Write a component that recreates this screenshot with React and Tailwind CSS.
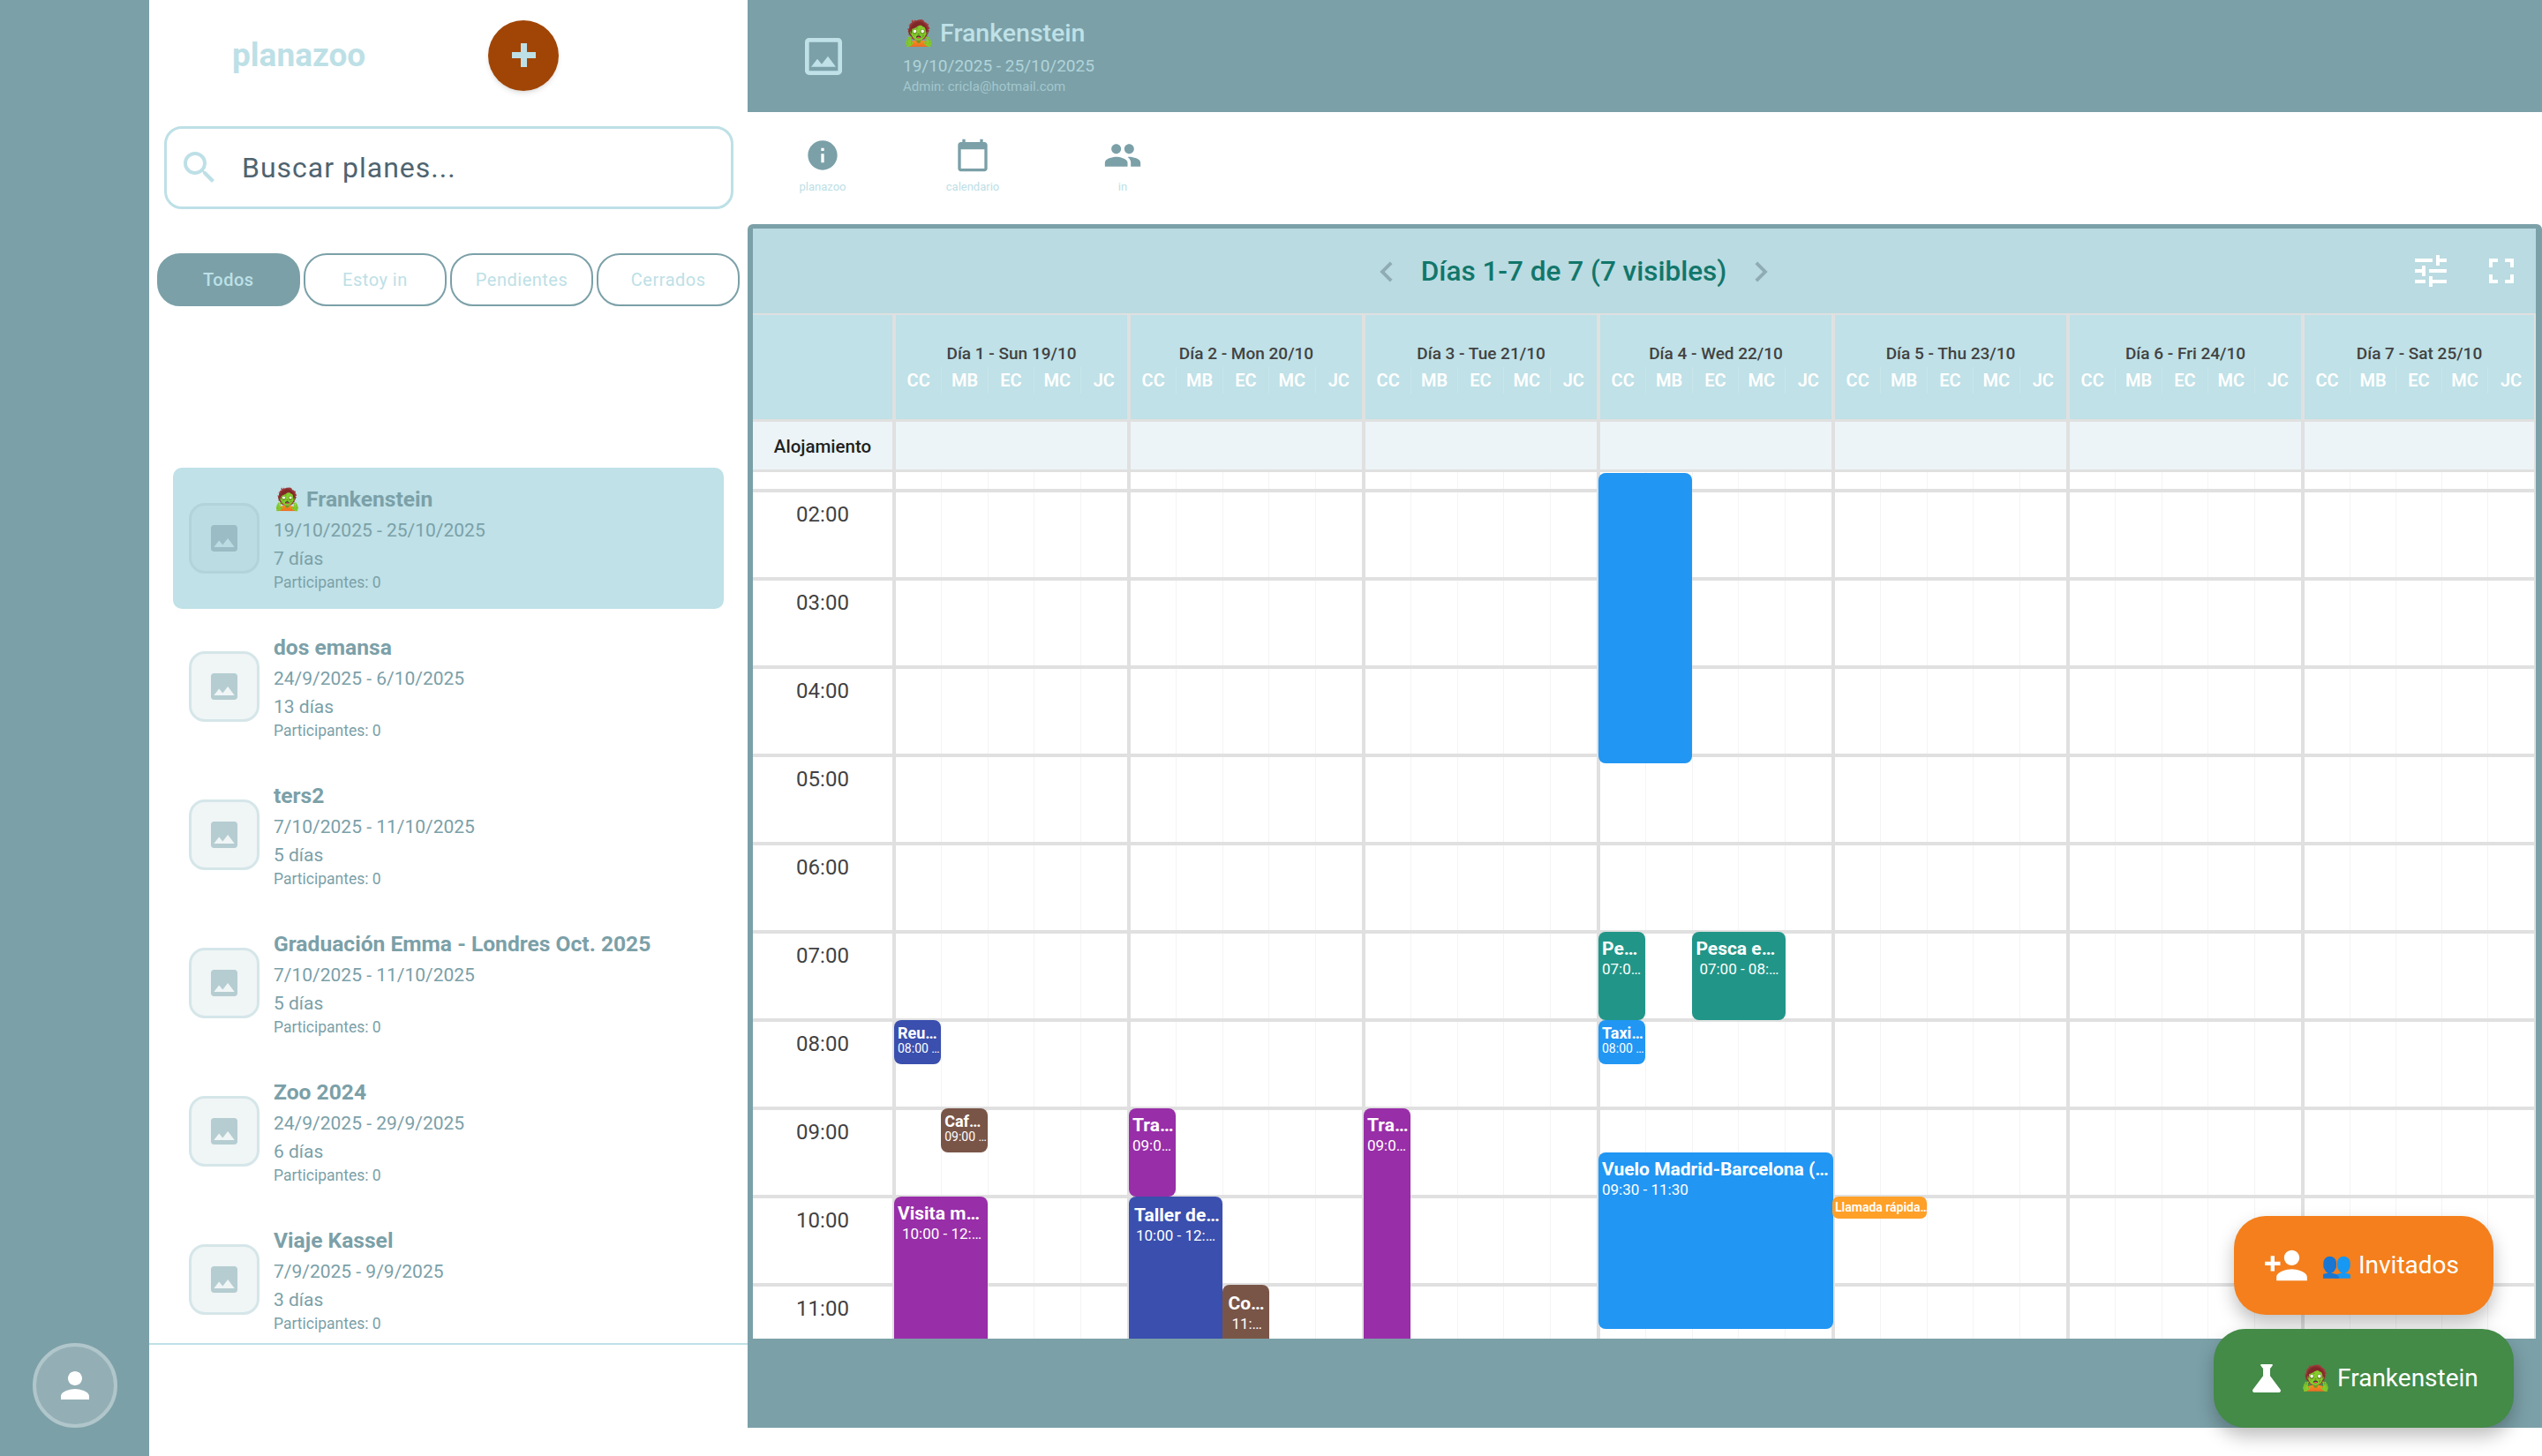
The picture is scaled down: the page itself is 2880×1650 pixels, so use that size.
import {
  MdSearch, MdImage, MdOutlineImage, MdInfo, MdCalendarToday, MdPeople,
  MdChevronLeft, MdChevronRight, MdTune, MdFullscreen, MdPerson, MdPersonAdd, MdScience,
} from 'react-icons/md';

const rail = 'bg-[#7ba0a8]';

const plans = [
  { name: '🧟 Frankenstein', dates: '19/10/2025 - 25/10/2025', days: '7 días', active: true },
  { name: 'dos emansa', dates: '24/9/2025 - 6/10/2025', days: '13 días' },
  { name: 'ters2', dates: '7/10/2025 - 11/10/2025', days: '5 días' },
  { name: 'Graduación Emma - Londres Oct. 2025', dates: '7/10/2025 - 11/10/2025', days: '5 días' },
  { name: 'Zoo 2024', dates: '24/9/2025 - 29/9/2025', days: '6 días' },
  { name: 'Viaje Kassel', dates: '7/9/2025 - 9/9/2025', days: '3 días' },
];

const filters = ['Todos', 'Estoy in', 'Pendientes', 'Cerrados'];
const days = ['Día 1 - Sun 19/10', 'Día 2 - Mon 20/10', 'Día 3 - Tue 21/10', 'Día 4 - Wed 22/10', 'Día 5 - Thu 23/10', 'Día 6 - Fri 24/10', 'Día 7 - Sat 25/10'];
const people = ['CC', 'MB', 'EC', 'MC', 'JC'];
const hours = ['02:00', '03:00', '04:00', '05:00', '06:00', '07:00', '08:00', '09:00', '10:00', '11:00'];

const events = [
  { day: 3, col: 0, span: 2, start: 1.8, end: 5.09, color: 'bg-[#2196f3]' },
  { day: 3, col: 0, span: 1, start: 7, end: 8, color: 'bg-[#219688]', title: 'Pe…', time: '07:0…' },
  { day: 3, col: 2, span: 2, start: 7, end: 8, color: 'bg-[#219688]', title: 'Pesca e…', time: '07:00 - 08:…', timePad: 'pl-[4px]' },
  { day: 3, col: 0, span: 1, start: 8, end: 8.5, color: 'bg-[#2196f3]', title: 'Taxi…', time: '08:00 …', small: true },
  { day: 3, col: 0, span: 5, start: 9.5, end: 11.5, color: 'bg-[#2196f3]', title: 'Vuelo Madrid-Barcelona (…', time: '09:30 - 11:30' },
  { day: 0, col: 0, span: 1, start: 8, end: 8.5, color: 'bg-[#3a4fae]', title: 'Reu…', time: '08:00 …', small: true },
  { day: 0, col: 1, span: 1, start: 9, end: 9.5, color: 'bg-[#795548]', title: 'Caf…', time: '09:00 …', small: true },
  { day: 0, col: 0, span: 2, start: 10, end: 13, color: 'bg-[#982ea8]', title: 'Visita m…', time: '10:00 - 12:…', timePad: 'pl-[5px]' },
  { day: 1, col: 0, span: 1, start: 9, end: 10, color: 'bg-[#982ea8]', title: 'Tra…', time: '09:0…' },
  { day: 1, col: 0, span: 2, start: 10, end: 13, color: 'bg-[#3a4fae]', title: 'Taller de…', time: '10:00 - 12:…', low: true, timePad: 'pl-[2px]' },
  { day: 1, col: 2, span: 1, start: 11, end: 13, color: 'bg-[#795548]', title: 'Co…', time: '11:…', low: true, timePad: 'pl-[4px]' },
  { day: 2, col: 0, span: 1, start: 9, end: 13, color: 'bg-[#982ea8]', title: 'Tra…', time: '09:0…' },
];

const gridCols = 'grid grid-cols-[160px_repeat(6,266px)_1fr]';

function PlanItem({ plan }) {
  return (
    <div className={`mx-[27px] mb-[8px] h-[160px] shrink-0 flex items-center pl-[18px] rounded-[10px] ${plan.active ? 'bg-[#bfe1e7]' : ''}`}>
      <div className={`w-[80px] h-[80px] shrink-0 rounded-[18px] border-[3px] flex items-center justify-center ${plan.active ? 'bg-[#bbdce2] border-[#b2d3d9] text-[#9bbcc4]' : 'bg-[#f0f5f6] border-[#d5e6e9] text-[#b5cdd1]'}`}>
        <MdImage size={40} />
      </div>
      <div className="ml-[16px] text-[#7ba0a8] whitespace-nowrap">
        <div className="h-[34px] leading-[34px] text-[24.6px] font-bold mb-[1px]">{plan.name}</div>
        <div className="h-[34px] leading-[34px] text-[21px]">{plan.dates}</div>
        <div className="h-[30px] leading-[30px] text-[21px]">{plan.days}</div>
        <div className="h-[24px] leading-[24px] text-[17.5px]">Participantes: 0</div>
      </div>
    </div>
  );
}

function Sidebar() {
  return (
    <div className="w-[678px] shrink-0 h-[1650px] flex flex-col bg-white">
      <div className="h-[125px] flex items-center">
        <div className="ml-[94px] w-[290px] text-[37px] font-bold text-[#bde0e6] leading-none">planazoo</div>
        <div className="w-[80px] h-[80px] rounded-full bg-[#a04506] text-[#bde0e6] flex items-center justify-center shadow-md">
          <svg width="27" height="27" viewBox="0 0 27 27" fill="currentColor">
            <path d="M10 0h7v10h10v7H17v10h-7V17H0v-7h10z" />
          </svg>
        </div>
      </div>
      <div className="ml-[17px] mr-[16px] mt-[18px] h-[94px] rounded-[20px] border-[3px] border-[#bde0e6] flex items-center pl-[13px]">
        <MdSearch size={48} className="text-[#bde0e6]" />
        <span className="ml-[24px] text-[32px] tracking-[1px] text-[#4f6470]">Buscar planes...</span>
      </div>
      <div className="mx-[9px] mt-[50px] grid grid-cols-4 gap-[4.5px]">
        {filters.map((f, i) => (
          <div
            key={f}
            className={`h-[60px] rounded-[26px] border-2 border-[#7ba0a8] flex items-center justify-center text-[20px] tracking-[0.5px] text-[#bde0e6] ${i === 0 ? 'bg-[#7ba0a8] font-medium' : ''}`}
          >
            {f}
          </div>
        ))}
      </div>
      <div className="mt-[183px] h-[994px] flex flex-col overflow-hidden border-b-2 border-[#bde0e6]">
        {plans.map((p) => (
          <PlanItem key={p.name} plan={p} />
        ))}
      </div>
    </div>
  );
}

function TopTab({ icon, label }) {
  return (
    <div className="w-[170px] flex flex-col items-center text-[#7ba0a8]">
      <div className="h-[40px] flex items-center justify-center">{icon}</div>
      <div className="mt-[6px] text-[13px] leading-[20px] text-[#bde0e6]">{label}</div>
    </div>
  );
}

function SubCols() {
  return (
    <div className="absolute inset-0 grid grid-cols-5">
      {people.map((p) => (
        <div key={p} className="border-r border-[#f4f4f4] last:border-r-0" />
      ))}
    </div>
  );
}

function EventBlock({ ev }) {
  const left = 160 + ev.day * 266 + ev.col * 53.2;
  const top = 201 + (ev.start - 2) * 100;
  const style = { left, top, width: ev.span * 53.2 - 0.5, height: (ev.end - ev.start) * 100 };
  return (
    <div className={`absolute rounded-[8px] text-white whitespace-nowrap ${ev.color} ${ev.low ? 'pt-[9px] px-[6px]' : ev.small ? 'pt-[6px] px-[4px]' : 'pt-[7px] px-[4px]'}`} style={style}>
      {ev.title && (
        <div className={`font-bold ${ev.small ? 'text-[18px] leading-[18px]' : 'text-[21px] leading-[24px]'}`}>{ev.title}</div>
      )}
      {ev.time && (
        <div className={`${ev.timePad || ''} ${ev.small ? 'text-[14px] leading-[16px]' : 'text-[17px] leading-[22px]'}`}>{ev.time}</div>
      )}
    </div>
  );
}

function Calendar() {
  return (
    <div className="h-[1263px] rounded-t-[6px] border-t-[5px] border-l-[6px] border-r-[7px] border-[#7ba0a8] flex flex-col overflow-hidden">
      <div className="h-[96px] shrink-0 bg-[#b9dbe1] flex items-center relative">
        <div className="w-full flex items-center justify-center pr-[160px] pt-[2px]">
          <MdChevronLeft size={46} className="text-[#8fabb3]" />
          <span className="mx-[16px] text-[31.5px] font-medium text-[#12766b]">Días 1-7 de 7 (7 visibles)</span>
          <MdChevronRight size={46} className="text-[#8fabb3]" />
        </div>
        <div className="absolute right-[15px] top-0 h-full flex items-center gap-[32px] text-white">
          <MdTune size={48} />
          <MdFullscreen size={48} />
        </div>
      </div>
      <div className="relative h-[1162px] overflow-hidden bg-white">
        <div className={`${gridCols} h-[120px] bg-[#bfe1e7] border-t-2 border-[#e0e0e0]`}>
          <div className="border-r-2 border-[#e0e0e0] bg-[#bfe1e7]" />
          {days.map((d) => (
            <div key={d} className="border-x-2 border-[#e0e0e0] flex flex-col justify-center">
              <div className="h-[30px] leading-[30px] text-center text-[19px] font-medium text-[#424242]">{d}</div>
              <div className="h-[30px] grid grid-cols-5">
                {people.map((p) => (
                  <div key={p} className="leading-[30px] text-center text-[20px] font-semibold text-white border-r border-[#c9e6ea] last:border-r-0">{p}</div>
                ))}
              </div>
            </div>
          ))}
        </div>
        <div className={`${gridCols} h-[60px] bg-[#ecf4f7] border-y-[3px] border-[#e0e0e0]`}>
          <div className="border-r-2 border-[#e0e0e0] flex items-center justify-center pt-[2px] text-[20.5px] font-medium text-[#212121]">Alojamiento</div>
          {days.map((d) => (
            <div key={d} className="border-x-2 border-[#e0e0e0]" />
          ))}
        </div>
        <div className={`${gridCols} h-[21px]`}>
          <div className="border-r-2 border-b-2 border-[#e0e0e0]" />
          {days.map((d) => (
            <div key={d} className="relative border-x-2 border-b-2 border-[#e0e0e0]"><SubCols /></div>
          ))}
        </div>
        {hours.map((h) => (
          <div key={h} className={`${gridCols} h-[100px]`}>
            <div className="border-y-2 border-r-2 border-[#e0e0e0] pt-[9px] text-center text-[24px] leading-[32px] text-[#424242]">{h}</div>
            {days.map((d) => (
              <div key={d} className="relative border-2 border-[#e0e0e0]"><SubCols /></div>
            ))}
          </div>
        ))}
        {events.map((ev, i) => (
          <EventBlock key={i} ev={ev} />
        ))}
        <div className="absolute left-[1223px] top-[1001px] w-[107px] h-[25px] rounded-[7px] bg-[#ffa028] text-white text-[14px] font-semibold leading-[25px] px-[3px] whitespace-nowrap">Llamada rápida…</div>
      </div>
    </div>
  );
}

function Fab({ color, icon, emoji, label, className }) {
  return (
    <div className={`h-[112px] rounded-[36px] flex items-center justify-center text-white text-[28px] shadow-[0_10px_20px_rgba(0,0,0,0.25)] ${color} ${className}`}>
      {icon}
      <span className="ml-[14px]">{emoji} {label}</span>
    </div>
  );
}

export default function App() {
  return (
    <div className="relative w-[2880px] h-[1650px] flex overflow-hidden bg-white font-[Roboto,sans-serif]">
      <div className={`w-[169px] shrink-0 h-full flex flex-col items-center pt-[1522px] ${rail}`}>
        <div className="w-[96px] h-[96px] rounded-full bg-[#93afb5] border-4 border-[#b0c6cb] flex items-center justify-center text-white">
          <MdPerson size={48} />
        </div>
      </div>
      <Sidebar />
      <div className="flex-1 flex flex-col">
        <div className={`h-[127px] flex items-center ${rail}`}>
          <MdOutlineImage size={56} className="ml-[58px] text-[#bfe1e7]" />
          <div className="ml-[62px] text-[#bfe1e7]">
            <div className="text-[28.5px] font-medium leading-[36px]">🧟 Frankenstein</div>
            <div className="mt-[6px] text-[19px] leading-[26px] opacity-80">19/10/2025 - 25/10/2025</div>
            <div className="text-[15px] leading-[20px] opacity-60">Admin: cricla@hotmail.com</div>
          </div>
        </div>
        <div className="h-[127px] flex pt-[29px]">
          <TopTab icon={<MdInfo size={40} />} label="planazoo" />
          <TopTab icon={<MdCalendarToday size={40} />} label="calendario" />
          <TopTab icon={<MdPeople size={44} />} label="in" />
        </div>
        <Calendar />
        <div className={`h-[101px] ${rail}`} />
      </div>
      <Fab color="bg-[#f47f1c]" icon={<MdPersonAdd size={52} />} emoji="👥" label="Invitados" className="absolute left-[2531px] top-[1378px] w-[294px] pr-[6px]" />
      <Fab color="bg-[#438b47]" icon={<MdScience size={48} />} emoji="🧟" label="Frankenstein" className="absolute left-[2508px] top-[1506px] w-[340px] pr-[4px]" />
    </div>
  );
}
